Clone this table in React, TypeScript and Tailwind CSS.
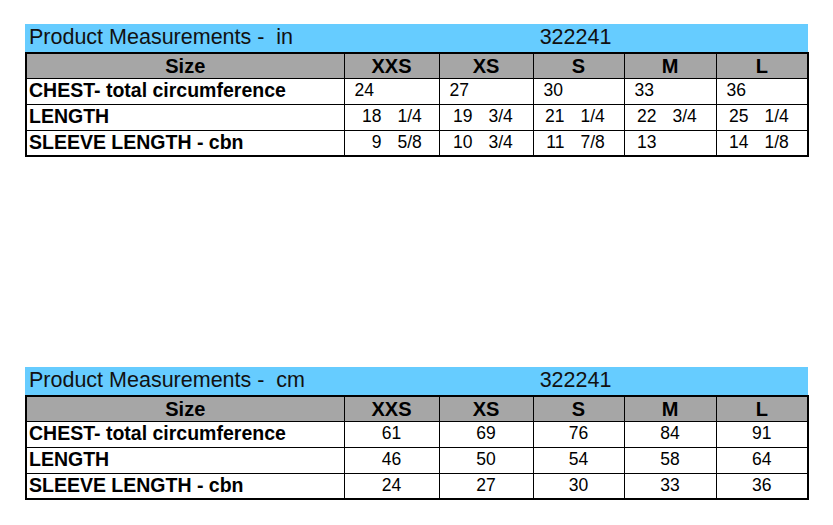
import React from "react";

type Cell = { whole: string; frac?: string };

const sizes = ["XXS", "XS", "S", "M", "L"];
const colWidths = ["w-[318px]", "w-[95px]", "w-[94px]", "w-[91px]", "w-[92px]", "w-[92px]"];
// where the whole-number part ends inside each size column (inch table)
const wholeEnd = ["w-[37px]", "w-[33px]", "w-[31px]", "w-[32px]", "w-[32px]"];

const inchRows: { label: string; values: Cell[]; plain?: boolean }[] = [
  {
    label: "CHEST- total circumference",
    plain: true,
    values: [{ whole: "24" }, { whole: "27" }, { whole: "30" }, { whole: "33" }, { whole: "36" }],
  },
  {
    label: "LENGTH",
    values: [
      { whole: "18", frac: "1/4" },
      { whole: "19", frac: "3/4" },
      { whole: "21", frac: "1/4" },
      { whole: "22", frac: "3/4" },
      { whole: "25", frac: "1/4" },
    ],
  },
  {
    label: "SLEEVE LENGTH - cbn",
    values: [
      { whole: "9", frac: "5/8" },
      { whole: "10", frac: "3/4" },
      { whole: "11", frac: "7/8" },
      { whole: "13" },
      { whole: "14", frac: "1/8" },
    ],
  },
];

const cmRows = [
  { label: "CHEST- total circumference", values: ["61", "69", "76", "84", "91"] },
  { label: "LENGTH", values: ["46", "50", "54", "58", "64"] },
  { label: "SLEEVE LENGTH - cbn", values: ["24", "27", "30", "33", "36"] },
];

function TitleBar({ unit }: { unit: string }) {
  return (
    <div className="flex h-[28px] w-[783px] items-center bg-[#66ccff] text-[21.5px] leading-none text-[#111]">
      <div className="w-[318px] whitespace-pre pl-[4px]">{"Product Measurements -  " + unit}</div>
      <div className="flex-1 text-center">322241</div>
    </div>
  );
}

function HeaderRow() {
  return (
    <tr className="h-[25px] bg-[#a6a6a6] text-[20px]">
      <th className={colWidths[0] + " border border-black p-0 text-center font-bold"}>Size</th>
      {sizes.map((s, i) => (
        <th key={s} className={colWidths[i + 1] + " border border-black p-0 text-center font-bold"}>
          {s}
        </th>
      ))}
    </tr>
  );
}

function InchTable() {
  return (
    <table className="w-[783px] table-fixed border-collapse border-2 border-black text-[17.5px] leading-none">
      <thead>
        <HeaderRow />
      </thead>
      <tbody>
        {inchRows.map((row) => (
          <tr key={row.label} className="h-[26px]">
            <td className="border border-black pl-[2px] text-[19.5px] font-bold">{row.label}</td>
            {row.values.map((v, i) => (
              <td key={i} className="border border-black p-0">
                {row.plain ? (
                  <span className="pl-[10px]">{v.whole}</span>
                ) : (
                  <div className="flex">
                    <span className={wholeEnd[i] + " text-right"}>{v.whole}</span>
                    {v.frac && <span className="ml-[16px]">{v.frac}</span>}
                  </div>
                )}
              </td>
            ))}
          </tr>
        ))}
      </tbody>
    </table>
  );
}

function CmTable() {
  return (
    <table className="w-[783px] table-fixed border-collapse border-2 border-black text-[17.5px] leading-none">
      <thead>
        <HeaderRow />
      </thead>
      <tbody>
        {cmRows.map((row) => (
          <tr key={row.label} className="h-[26px]">
            <td className="border border-black pl-[2px] text-[19.5px] font-bold">{row.label}</td>
            {row.values.map((v, i) => (
              <td key={i} className="border border-black p-0 text-center">
                {v}
              </td>
            ))}
          </tr>
        ))}
      </tbody>
    </table>
  );
}

export default function App() {
  return (
    <div className="min-h-screen w-full bg-white pl-[25px] pt-[24px] text-black" style={{ fontFamily: '"Liberation Sans", Arial, sans-serif' }}>
      <div className="flex flex-col gap-[210px]">
        <div>
          <TitleBar unit="in" />
          <InchTable />
        </div>
        <div>
          <TitleBar unit="cm" />
          <CmTable />
        </div>
      </div>
    </div>
  );
}
